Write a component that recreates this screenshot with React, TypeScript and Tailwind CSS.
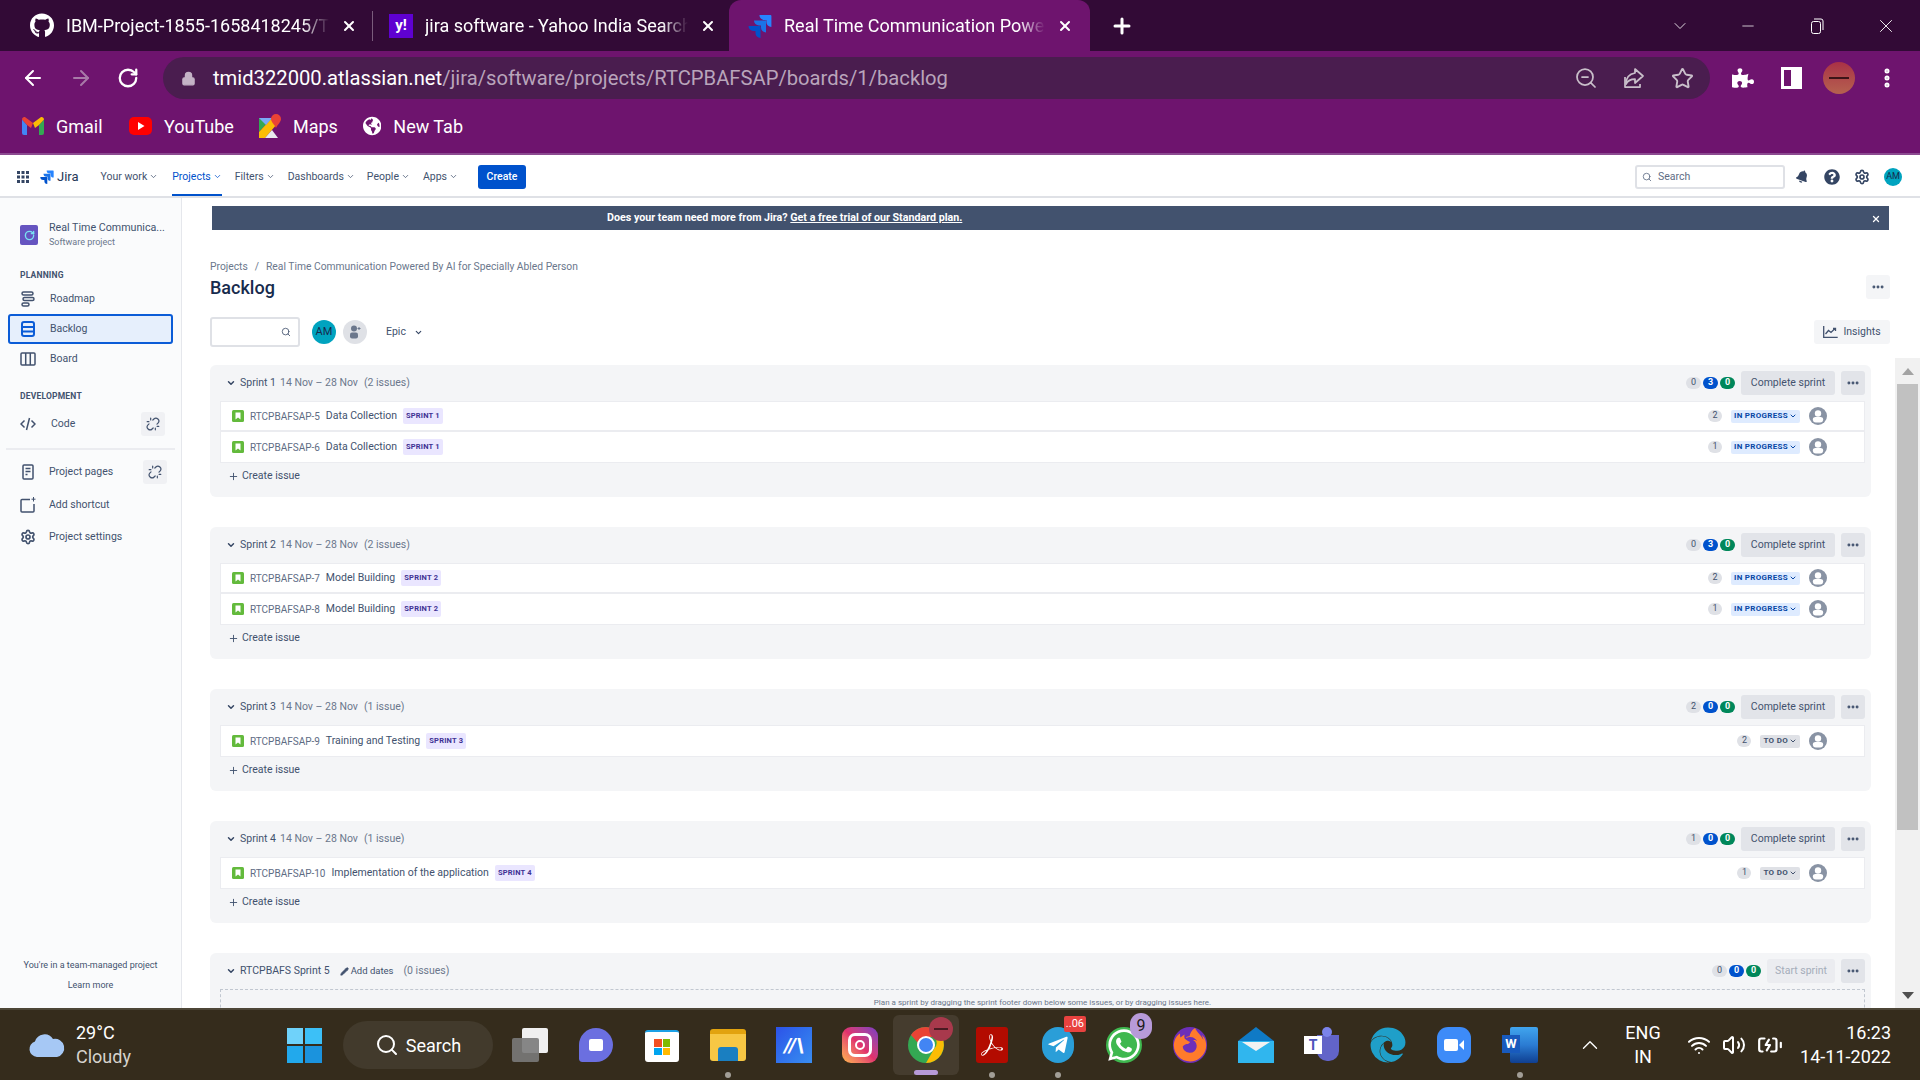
import { ChevronDown, Plus, Search, X, Minus, ChevronUp, ArrowLeft, ArrowRight, RotateCw, Lock, ZoomOut, Star, EllipsisVertical, Ellipsis, Unlink, Wifi, Volume2, BatteryCharging, Pencil, Settings } from 'lucide-react';
import { FaGithub, FaGlobeAmericas, FaPuzzlePiece, FaBell, FaQuestionCircle, FaTelegramPlane, FaWhatsapp, FaFirefoxBrowser, FaEdge } from 'react-icons/fa';
import { SiAdobeacrobatreader } from 'react-icons/si';

const JiraMark = ({ size = 16 }: { size?: number }) => (
  <svg width={size} height={size} viewBox="0 0 24 24">
    <path d="M22.5 1H11.4a5 5 0 0 0 5 5h2v2a5 5 0 0 0 5 5V2a1 1 0 0 0-.9-1z" fill="#2684ff" />
    <path d="M17 6.500H6a5 5 0 0 0 5 5h2v2a5 5 0 0 0 5 5v-11.500a.5.5 0 0 0-1-.5z" fill="#1a73e8" />
    <path d="M11.500 12H.5a5 5 0 0 0 5 5h2v2a5 5 0 0 0 5 5V13a1 1 0 0 0-1-1z" fill="#0052cc" />
  </svg>
);

const StoryIcon = () => (
  <svg width="12" height="12" viewBox="0 0 12 12" className="shrink-0">
    <rect width="12" height="12" rx="1.500" fill="#63ba3c" />
    <path d="M3.500 2.500h5v7L6 7.500l-2.500 2z" fill="#fff" />
  </svg>
);

const PersonIcon = () => (
  <svg width="18" height="18" viewBox="0 0 18 18" className="shrink-0">
    <circle cx="9" cy="9" r="9" fill="#8993a4" />
    <circle cx="9" cy="6.500" r="3.200" fill="#fff" />
    <path d="M3.800 12.500c0-1.800 1.500-2.500 2.500-2.500h5.400c1 0 2.500.7 2.500 2.500V13a3 3 0 0 1-3 2.500H6.800a3 3 0 0 1-3-2.500z" fill="#fff" />
  </svg>
);

const TopNavItem = ({ label, active, className }: { label: string; active?: boolean; className: string }) => (
  <div className={`flex items-center gap-[2px] text-[10.5px] ${active ? 'text-[#0052cc]' : 'text-[#42526e]'} ${className}`}>
    {label}
    <ChevronDown size={9} strokeWidth={2} />
  </div>
);

const Tab = ({ icon, label, active, width }: { icon: React.ReactNode; label: string; active?: boolean; width: string }) => (
  <div className={`flex items-center h-full shrink-0 ${width} ${active ? 'bg-[#6e146e] rounded-t-[12px]' : ''}`}>
    <div className="w-[24px] flex justify-center shrink-0">{icon}</div>
    <span className="ml-[12px] flex-1 min-w-0 overflow-hidden whitespace-nowrap text-[18px] text-white [mask-image:linear-gradient(to_right,black_90%,transparent)]">{label}</span>
    <X size={16} strokeWidth={3} className="text-white ml-[12px] shrink-0" />
  </div>
);

const Bookmark = ({ icon, label, width }: { icon: React.ReactNode; label: string; width: string }) => (
  <div className={`flex items-center gap-[12px] shrink-0 ${width}`}>
    {icon}
    <span className="text-[18px] text-white whitespace-nowrap">{label}</span>
  </div>
);

function BrowserChrome() {
  return (
    <div className="shrink-0" style={{ fontFamily: 'Roboto, sans-serif' }}>
      <div className="h-[51px] bg-[#320a36] flex items-center pl-[30px]">
        <Tab width="w-[327px]" label="IBM-Project-1855-1658418245/T" icon={<FaGithub size={25} className="text-white" />} />
        <div className="w-[1px] h-[30px] bg-[#7a5c7c] ml-[15px] mr-[16px]" />
        <Tab width="w-[327px]" label="jira software - Yahoo India Search" icon={<div className="w-[24px] h-[24px] bg-[#5f01d1] text-white text-[15px] font-bold flex items-center justify-center">y!</div>} />
        <div className="w-[13px]" />
        <div className="w-[361px] h-full">
          <Tab active width="w-[361px] pl-[19px] pr-[17px]" label="Real Time Communication Powered By AI" icon={<JiraMark size={26} />} />
        </div>
        <Plus size={24} strokeWidth={3} className="text-white ml-[20px]" />
        <div className="flex-1" />
        <div className="flex items-center text-white">
          <div className="w-[68px] flex justify-center"><ChevronDown size={20} strokeWidth={1} /></div>
          <div className="w-[68px] flex justify-center"><Minus size={18} strokeWidth={1} /></div>
          <div className="w-[70px] flex justify-center">
            <svg width="16" height="16" viewBox="0 0 16 16" fill="none" stroke="#fff"><rect x="2.500" y="3.500" width="9" height="12" rx="2" /><path d="M5 1h7a2 2 0 0 1 2 2v9" /></svg>
          </div>
          <div className="w-[68px] flex justify-center"><X size={22} strokeWidth={1} /></div>
        </div>
      </div>

      <div className="h-[52px] bg-[#6e146e] flex items-center pl-[21px] pt-[2px]">
        <div className="flex items-center w-[142px]">
          <ArrowLeft size={24} className="text-white" strokeWidth={2} />
          <ArrowRight size={24} className="text-[#a87aa8] ml-[24px]" strokeWidth={2} />
          <RotateCw size={22} className="text-white ml-[24px]" strokeWidth={2.500} />
        </div>
        <div className="w-[1547px] h-[42px] rounded-full bg-[#4a1d4f] flex items-center pl-[18px]">
          <Lock size={15} className="text-[#c4b3c6]" fill="#c4b3c6" />
          <div className="ml-[17px] text-[20.200px] whitespace-nowrap">
            <span className="text-white">tmid322000.atlassian.net</span>
            <span className="text-[#b9a5bb]">/jira/software/projects/RTCPBAFSAP/boards/1/backlog</span>
          </div>
          <div className="flex-1" />
          <ZoomOut size={24} className="text-[#c9bfca]" strokeWidth={1.750} />
          <svg width="24" height="24" viewBox="0 0 24 24" fill="none" stroke="#c9bfca" strokeWidth="1.750" strokeLinejoin="round" className="ml-[24px]">
            <path d="M3 11v10h15v-3" />
            <path d="M13 3l8 7-8 7v-4c-4 0-7 1-9 5 0-6 3-10 9-11z" />
          </svg>
          <Star size={23} className="text-[#c9bfca] ml-[25px] mr-[16px]" strokeWidth={2} />
        </div>
        <FaPuzzlePiece size={22} className="text-white ml-[22px]" />
        <div className="w-[21px] h-[22px] border-[3px] border-white bg-[#6e146e] ml-[27px] flex justify-end"><div className="w-[8px] bg-white" /></div>
        <div className="w-[32px] h-[32px] rounded-full bg-gradient-to-b from-[#a93046] to-[#b5614f] ml-[21px] flex items-center justify-center">
          <div className="w-[20px] h-[2px] bg-[#3c1418]" />
        </div>
        <EllipsisVertical size={24} className="text-white ml-[20px]" strokeWidth={3} />
      </div>

      <div className="h-[50px] bg-[#6e146e] flex items-center pl-[22px] pb-[4px]">
        <Bookmark width="w-[107px]" label="Gmail" icon={
          <svg width="22" height="18" viewBox="0 0 22 18">
            <path d="M0 2.500v13.500a2 2 0 0 0 2 2h3V8z" fill="#4285f4" />
            <path d="M22 2.500v13.500a2 2 0 0 1-2 2h-3V8z" fill="#34a853" />
            <path d="M0 2.500C0 .5 2.200-.6 3.600.5L11 6l-2 5-4-3z" fill="#ea4335" />
            <path d="M22 2.500c0-2-2.200-3.100-3.600-2L11 6l2 5 4-3z" fill="#fbbc04" />
          </svg>} />
        <Bookmark width="w-[130px]" label="YouTube" icon={
          <svg width="23" height="18" viewBox="0 0 23 18">
            <rect width="23" height="18" rx="5" fill="#ff0000" />
            <path d="M9 5l6.500 4L9 13z" fill="#fff" />
          </svg>} />
        <Bookmark width="w-[104px]" label="Maps" icon={
          <svg width="22" height="24" viewBox="0 0 22 24">
            <path d="M0 4h13L0 18z" fill="#34a853" />
            <path d="M0 18L13 4l5 6L6 24H0z" fill="#fbbc04" />
            <path d="M6 24L13 16l6 8z" fill="#e8eaed" />
            <path d="M0 4h13l-6 7z" fill="#7baaf7" />
            <path d="M17 0a5 5 0 0 1 5 5c0 3-3 5-5 9-1-3-5-6-5-9a5 5 0 0 1 5-5z" fill="#ea4335" />
          </svg>} />
        <Bookmark width="w-[100px]" label="New Tab" icon={<FaGlobeAmericas size={22} className="text-white" />} />
      </div>
      <div className="h-[2px] bg-[#8b4a90]" />
    </div>
  );
}

function JiraNav() {
  return (
    <div className="h-[43px] shrink-0 bg-white border-b-2 border-[#dfe1e6] flex items-center pl-[17px] pt-[2px] relative">
      <svg width="12" height="12" viewBox="0 0 12 12" fill="#344563">
        <rect width="3" height="3" /><rect x="4.500" width="3" height="3" /><rect x="9" width="3" height="3" />
        <rect y="4.500" width="3" height="3" /><rect x="4.500" y="4.500" width="3" height="3" /><rect x="9" y="4.500" width="3" height="3" />
        <rect y="9" width="3" height="3" /><rect x="4.500" y="9" width="3" height="3" /><rect x="9" y="9" width="3" height="3" />
      </svg>
      <div className="ml-[11px]"><JiraMark size={14} /></div>
      <span className="ml-[3px] text-[13px] text-[#253858]">Jira</span>
      <TopNavItem label="Your work" className="ml-[22px]" />
      <div className="ml-[14px] h-full flex items-center relative">
        <TopNavItem label="Projects" active className="" />
        <div className="absolute left-0 right-0 bottom-0 h-[2px] bg-[#0052cc]" />
      </div>
      <TopNavItem label="Filters" className="ml-[13px]" />
      <TopNavItem label="Dashboards" className="ml-[13px]" />
      <TopNavItem label="People" className="ml-[12px]" />
      <TopNavItem label="Apps" className="ml-[13px]" />
      <div className="ml-[20px] w-[48px] h-[24px] bg-[#0052cc] rounded-[3px] text-white text-[10.5px] font-medium flex items-center justify-center">Create</div>
      <div className="flex-1" />
      <div className="w-[150px] h-[24px] rounded-[3px] border-2 border-[#dfe1e6] flex items-center pl-[5px] gap-[6px] text-[10.5px] text-[#5e6c84]">
        <Search size={10} />
        Search
      </div>
      <FaBell size={13} className="text-[#344563] ml-[11px] rotate-[20deg]" />
      <FaQuestionCircle size={16} className="text-[#344563] ml-[15px]" />
      <Settings size={16} strokeWidth={2.500} className="text-[#344563] ml-[14px]" />
      <div className="w-[18px] h-[18px] rounded-full bg-[#00a3bf] text-[#172b4d] text-[9px] flex items-center justify-center ml-[14px] mr-[18px]">AM</div>
    </div>
  );
}

const SideLabel = ({ children, className }: { children: React.ReactNode; className: string }) => (
  <div className={`h-[16px] pl-[20px] text-[8.500px] font-bold tracking-[0.2px] text-[#42526e] flex items-center ${className}`}>{children}</div>
);

const SideItem = ({ icon, label, active }: { icon: React.ReactNode; label: string; active?: boolean }) => (
  <div className={`h-[30px] mx-[8px] flex items-center gap-[14px] text-[10.5px] text-[#42526e] rounded-[3px] ${active ? 'bg-[#e6effc] border-2 border-[#0b5cd7] pl-[10px]' : 'pl-[12px]'}`}>
    <div className="w-[16px] flex justify-center shrink-0">{icon}</div>
    {label}
  </div>
);

const UnlinkChip = () => (
  <div className="w-[24px] h-[24px] rounded-[3px] bg-[#f0f1f4] flex items-center justify-center">
    <Unlink size={14} className="text-[#42526e]" />
  </div>
);

function Sidebar() {
  return (
    <div className="w-[182px] shrink-0 bg-[#fafbfc] border-r border-[#e5e7ec] flex flex-col">
      <div className="mt-[23px] h-[28px] flex items-center pl-[20px] gap-[11px]">
        <div className="w-[18px] h-[20px] rounded-[2px] bg-[#6554c0] flex items-center justify-center">
          <RotateCw size={11} className="text-[#79e2f2]" strokeWidth={3} />
        </div>
        <div>
          <div className="text-[10.700px] leading-[14px] text-[#42526e]">Real Time Communica...</div>
          <div className="text-[9px] leading-[14px] text-[#6b778c]">Software project</div>
        </div>
      </div>
      <SideLabel className="mt-[18px]">PLANNING</SideLabel>
      <div className="mt-[1px]">
        <SideItem label="Roadmap" icon={
          <svg width="14" height="16" viewBox="0 0 14 16" fill="none" stroke="#42526e" strokeWidth="1.500">
            <rect x="1" y="1" width="11" height="3" rx="1.500" /><rect x="2" y="6.500" width="11" height="3" rx="1.500" /><rect x="1" y="12" width="7" height="3" rx="1.500" />
          </svg>} />
        <SideItem active label="Backlog" icon={
          <svg width="14" height="16" viewBox="0 0 14 16" fill="none" stroke="#0b5cd7" strokeWidth="2">
            <rect x="1" y="1" width="12" height="14" rx="2" /><path d="M1 6h12M1 10.500h12" />
          </svg>} />
        <SideItem label="Board" icon={
          <svg width="16" height="14" viewBox="0 0 16 14" fill="none" stroke="#42526e" strokeWidth="1.500">
            <rect x="1" y="1" width="14" height="12" rx="1" /><path d="M5.700 1v12M10.300 1v12" />
          </svg>} />
      </div>
      <SideLabel className="mt-[14px]">DEVELOPMENT</SideLabel>
      <div className="mt-[8px] h-[24px] flex items-center pl-[20px] pr-[16px] text-[10.5px] text-[#42526e]">
        <svg width="16" height="14" viewBox="0 0 16 14" fill="none" stroke="#42526e" strokeWidth="1.500">
          <path d="M4.500 3.500L1 7l3.500 3.500M11.500 3.500L15 7l-3.500 3.500M9.500 1L6.500 13" />
        </svg>
        <span className="ml-[15px] flex-1">Code</span>
        <UnlinkChip />
      </div>
      <div className="mt-[12px] mx-[6px] h-[2px] bg-[#ebecf0]" />
      <div className="mt-[10px] h-[24px] flex items-center pl-[20px] pr-[14px] text-[10.5px] text-[#42526e]">
        <svg width="16" height="16" viewBox="0 0 16 16" fill="none" stroke="#42526e" strokeWidth="1.500">
          <rect x="3" y="1" width="10" height="14" rx="1" /><path d="M5.500 4.500h5M5.500 7.500h5M5.500 10.500h2" />
        </svg>
        <span className="ml-[13px] flex-1">Project pages</span>
        <UnlinkChip />
      </div>
      <div className="mt-[9px] h-[24px] flex items-center pl-[20px] text-[10.5px] text-[#42526e]">
        <svg width="16" height="16" viewBox="0 0 16 16" fill="none" stroke="#42526e" strokeWidth="1.500">
          <path d="M10 2.500H2a1 1 0 0 0-1 1V14a1 1 0 0 0 1 1h11a1 1 0 0 0 1-1V7" /><path d="M13.500 0v4.500M11.500 2.200h4" strokeWidth="1" />
        </svg>
        <span className="ml-[13px]">Add shortcut</span>
      </div>
      <div className="mt-[8px] h-[24px] flex items-center pl-[20px] text-[10.5px] text-[#42526e]">
        <Settings size={16} strokeWidth={2.500} />
        <span className="ml-[13px]">Project settings</span>
      </div>
      <div className="mt-auto pb-[15px] text-center text-[9px] text-[#42526e]">
        <div className="h-[16px] leading-[16px]">You're in a team-managed project</div>
        <div className="mt-[4px] h-[16px] leading-[16px]">Learn more</div>
      </div>
    </div>
  );
}

const CountBadge = ({ n, tone }: { n: number; tone: 'gray' | 'blue' | 'green' }) => (
  <div className={`w-[15px] h-[12px] rounded-full text-[9px] font-bold flex items-center justify-center ${tone === 'gray' ? 'bg-[#dfe1e6] text-[#42526e] font-normal' : tone === 'blue' ? 'bg-[#0052cc] text-white' : 'bg-[#00875a] text-white'}`}>{n}</div>
);

type Issue = { key: string; title: string; points: number };
type SprintProps = { name: string; issues: Issue[]; tag: string; status: 'IN PROGRESS' | 'TO DO'; counts: [number, number, number]; label: string };

const IssueRow = ({ issue, tag, status, last }: { issue: Issue; tag: string; status: SprintProps['status']; last: boolean }) => (
  <div className={`h-[30px] flex items-center pl-[11px] pr-[37px] ${last ? '' : 'border-b-2 border-[#ebecf0]'}`}>
    <StoryIcon />
    <span className="ml-[6px] text-[10px] text-[#5e6c84]">{issue.key}</span>
    <span className="ml-[6px] text-[10.5px] text-[#42526e]">{issue.title}</span>
    <span className="ml-[6px] h-[16px] px-[3px] rounded-[2px] bg-[#eae6ff] text-[#403294] text-[7.500px] font-bold tracking-[0.2px] flex items-center">{tag}</span>
    <div className="flex-1" />
    <div className="w-[14px] h-[12px] rounded-full bg-[#dfe1e6] text-[#42526e] text-[9px] flex items-center justify-center">{issue.points}</div>
    <div className="ml-[9px] h-[13px] px-[3px] rounded-[2px] text-[8px] font-bold tracking-[0.3px] flex items-center gap-[1px] bg-[#deebff] text-[#0747a6] data-[todo=true]:bg-[#dfe1e6] data-[todo=true]:text-[#42526e]" data-todo={status === 'TO DO'}>
      {status}
      <ChevronDown size={8} strokeWidth={3} />
    </div>
    <div className="ml-[9px]"><PersonIcon /></div>
  </div>
);

const SprintHeaderRight = ({ counts, label, disabled }: { counts: [number, number, number]; label: string; disabled?: boolean }) => (
  <div className="flex items-center">
    <CountBadge n={counts[0]} tone="gray" />
    <div className="ml-[2px]"><CountBadge n={counts[1]} tone="blue" /></div>
    <div className="ml-[2px]"><CountBadge n={counts[2]} tone="green" /></div>
    <div className={`ml-[6px] h-[24px] rounded-[3px] text-[10.5px] flex items-center justify-center ${disabled ? 'w-[68px] bg-[#ebecf0] text-[#a5adba]' : 'w-[94px] bg-[#e2e4e9] text-[#42526e]'}`}>{label}</div>
    <div className="ml-[6px] w-[24px] h-[24px] rounded-[3px] bg-[#e2e4e9] flex items-center justify-center">
      <Ellipsis size={14} strokeWidth={3} className="text-[#42526e]" />
    </div>
  </div>
);

function SprintCard({ name, issues, tag, status, counts, label }: SprintProps) {
  const n = issues.length;
  return (
    <div className="bg-[#f4f5f7] rounded-[6px] mr-[19px] mb-[30px] pb-[8px]">
      <div className="h-[36px] flex items-center pl-[16px] pr-[6px] text-[10.5px]">
        <ChevronDown size={10} strokeWidth={3.500} className="text-[#344563]" />
        <span className="ml-[4px] text-[#42526e]">{name}</span>
        <span className="ml-[4px] text-[#6b778c]">14 Nov – 28 Nov</span>
        <span className="ml-[6px] text-[#6b778c]">({n} issue{n > 1 ? 's' : ''})</span>
        <div className="flex-1" />
        <SprintHeaderRight counts={counts} label={label} />
      </div>
      <div className="mx-[10px] mr-[6px] bg-white border border-[#ebecf0]">
        {issues.map((issue, i) => (
          <IssueRow key={issue.key} issue={issue} tag={tag} status={status} last={i === n - 1} />
        ))}
      </div>
      <div className="h-[26px] flex items-center pl-[18px] gap-[3px] text-[10.5px] text-[#42526e]">
        <Plus size={11} />
        Create issue
      </div>
    </div>
  );
}

const sprints: SprintProps[] = [
  { name: 'Sprint 1', tag: 'SPRINT 1', status: 'IN PROGRESS', counts: [0, 3, 0], label: 'Complete sprint', issues: [{ key: 'RTCPBAFSAP-5', title: 'Data Collection', points: 2 }, { key: 'RTCPBAFSAP-6', title: 'Data Collection', points: 1 }] },
  { name: 'Sprint 2', tag: 'SPRINT 2', status: 'IN PROGRESS', counts: [0, 3, 0], label: 'Complete sprint', issues: [{ key: 'RTCPBAFSAP-7', title: 'Model Building', points: 2 }, { key: 'RTCPBAFSAP-8', title: 'Model Building', points: 1 }] },
  { name: 'Sprint 3', tag: 'SPRINT 3', status: 'TO DO', counts: [2, 0, 0], label: 'Complete sprint', issues: [{ key: 'RTCPBAFSAP-9', title: 'Training and Testing', points: 2 }] },
  { name: 'Sprint 4', tag: 'SPRINT 4', status: 'TO DO', counts: [1, 0, 0], label: 'Complete sprint', issues: [{ key: 'RTCPBAFSAP-10', title: 'Implementation of the application', points: 1 }] },
];

function Backlog() {
  return (
    <div className="flex-1 min-w-0 overflow-hidden pl-[28px] pr-[5px]">
      <div className="mt-[8px] ml-[2px] mr-[1px] h-[24px] bg-[#42526e] text-white text-[10.700px] flex items-center pl-[395px] relative">
        <span className="font-bold">Does your team need more from Jira?&nbsp;</span>
        <span className="font-bold underline">Get a free trial of our Standard plan.</span>
        <X size={10} strokeWidth={3} className="absolute right-[8px] top-[8px]" />
      </div>
      <div className="mt-[29px] h-[16px] flex items-center text-[10.300px] text-[#6b778c]">
        Projects<span className="mx-[7px]">/</span>Real Time Communication Powered By AI for Specially Abled Person
      </div>
      <div className="h-[24px] flex items-center justify-between">
        <h1 className="text-[18px] font-medium text-[#172b4d]">Backlog</h1>
        <div className="w-[24px] h-[24px] rounded-[3px] bg-[#f4f5f7] flex items-center justify-center">
          <Ellipsis size={14} strokeWidth={3} className="text-[#42526e]" />
        </div>
      </div>
      <div className="mt-[18px] h-[30px] flex items-center">
        <div className="w-[90px] h-[30px] border-2 border-[#dfe1e6] rounded-[3px] flex items-center justify-end pr-[7px]">
          <Search size={10} className="text-[#42526e]" />
        </div>
        <div className="ml-[12px] w-[24px] h-[24px] rounded-full bg-[#00a3bf] text-[#172b4d] text-[11px] flex items-center justify-center">AM</div>
        <div className="ml-[7px] w-[24px] h-[24px] rounded-full bg-[#dfe1e6] flex items-center justify-center">
          <svg width="14" height="14" viewBox="0 0 14 14" fill="#6b778c"><circle cx="6" cy="3.500" r="3" /><rect x="2" y="7.500" width="8" height="6" rx="2" /><path d="M11 2v3M9.500 3.500h3" stroke="#6b778c" /></svg>
        </div>
        <span className="ml-[19px] text-[10.5px] text-[#42526e]">Epic</span>
        <ChevronDown size={9} strokeWidth={3} className="ml-[8px] text-[#344563]" />
        <div className="flex-1" />
        <div className="h-[24px] w-[76px] rounded-[3px] bg-[#f4f5f7] flex items-center justify-center gap-[5px] text-[10.5px] text-[#42526e]">
          <svg width="15" height="12" viewBox="0 0 15 12" fill="none" stroke="#42526e" strokeWidth="1.300"><path d="M.7 0v11.300h14" /><path d="M2.500 8l3-3.500 2.500 2 4-4M10 2.500h2.500V5" /></svg>
          Insights
        </div>
      </div>
      <div className="mt-[18px]">
        {sprints.map((s) => <SprintCard key={s.name} {...s} />)}
        <div className="bg-[#f4f5f7] rounded-[6px] mr-[19px] h-[200px]">
          <div className="h-[36px] flex items-center pl-[16px] pr-[6px] text-[10.5px]">
            <ChevronDown size={10} strokeWidth={3.500} className="text-[#344563]" />
            <span className="ml-[4px] text-[#42526e]">RTCPBAFS Sprint 5</span>
            <Pencil size={9} fill="#42526e" className="ml-[10px] text-[#42526e]" />
            <span className="ml-[2px] text-[#42526e] text-[9.500px]">Add dates</span>
            <span className="ml-[10px] text-[#6b778c]">(0 issues)</span>
            <div className="flex-1" />
            <SprintHeaderRight counts={[0, 0, 0]} label="Start sprint" disabled />
          </div>
          <div className="mx-[10px] mr-[6px] h-[60px] border border-dashed border-[#c1c7d0] text-center text-[8px] leading-[26px] text-[#6b778c]">
            Plan a sprint by dragging the sprint footer down below some issues, or by dragging issues here.
          </div>
        </div>
      </div>
    </div>
  );
}

function FakeScrollbar() {
  return (
    <div className="w-[25px] shrink-0 flex flex-col pt-[160px]">
      <div className="flex-1 bg-[#f1f1f1] flex flex-col items-center">
        <div className="h-[26px] flex items-center justify-center">
          <div className="w-0 h-0 border-x-[6px] border-x-transparent border-b-[7px] border-b-[#a3a3a3]" />
        </div>
        <div className="w-[21px] h-[446px] bg-[#c1c1c1]" />
        <div className="flex-1" />
        <div className="h-[26px] flex items-center justify-center">
          <div className="w-0 h-0 border-x-[6px] border-x-transparent border-t-[7px] border-t-[#505050]" />
        </div>
      </div>
    </div>
  );
}

const TaskIcon = ({ children, dot, active }: { children: React.ReactNode; dot?: boolean; active?: boolean }) => (
  <div className={`w-[66px] flex flex-col items-center justify-center relative shrink-0 ${active ? 'bg-[#453c2e] rounded-[6px] h-[60px]' : 'h-full'}`}>
    {children}
    {dot && <div className="absolute bottom-[2px] w-[6px] h-[6px] rounded-full bg-[#a29e96]" />}
    {active && <div className="absolute bottom-[0px] w-[24px] h-[5px] rounded-full bg-[#b79ad8]" />}
  </div>
);

function Taskbar() {
  return (
    <div className="h-[72px] shrink-0 bg-[#352c1c] border-t-2 border-[#4d4637] flex items-center" style={{ fontFamily: 'Roboto, sans-serif' }}>
      <div className="w-[271px] shrink-0 flex items-center pl-[28px]">
        <svg width="38" height="26" viewBox="0 0 38 26">
          <path d="M9 25a8 8 0 0 1-2-15.600A10 10 0 0 1 25 7a8 8 0 0 1 4 18z" fill="#a6c8f5" />
        </svg>
        <div className="ml-[10px] text-white text-[18px] leading-[24px]">
          <div>29°C</div>
          <div className="text-[#d6d3cd]">Cloudy</div>
        </div>
      </div>
      <TaskIcon>
        <div className="grid grid-cols-2 gap-[2px] w-[35px] h-[35px]">
          <div className="bg-[#6fd2fa]" /><div className="bg-[#3cc0f7]" /><div className="bg-[#22a9ec]" /><div className="bg-[#1b93dd]" />
        </div>
      </TaskIcon>
      <div className="ml-[6px] w-[150px] h-[48px] rounded-full bg-[#423a2c] flex items-center justify-center gap-[7px] text-white text-[18px] shrink-0">
        <Search size={24} /> Search
      </div>
      <div className="w-[4px] shrink-0" />
      <TaskIcon>
        <div className="relative w-[36px] h-[34px]">
          <div className="absolute right-0 top-0 w-[26px] h-[25px] bg-[#f0f0f0] rounded-[2px]" />
          <div className="absolute left-0 bottom-0 w-[27px] h-[24px] bg-[#7a7a7a]/90 rounded-[2px]" />
        </div>
      </TaskIcon>
      <TaskIcon>
        <div className="w-[34px] h-[34px] rounded-[50%_50%_50%_10%] bg-[#6b6fe0] flex items-center justify-center">
          <div className="w-[14px] h-[12px] bg-white rounded-[2px]" />
        </div>
      </TaskIcon>
      <TaskIcon>
        <div className="w-[34px] h-[32px] bg-white rounded-[3px] mt-[2px] flex items-center justify-center border-t-2 border-[#1aa0e6]">
          <div className="grid grid-cols-2 gap-[1px] w-[16px] h-[16px]"><div className="bg-[#f25022]" /><div className="bg-[#7fba00]" /><div className="bg-[#00a4ef]" /><div className="bg-[#ffb900]" /></div>
        </div>
      </TaskIcon>
      <TaskIcon dot>
        <div className="w-[36px] h-[32px] bg-[#f7c744] rounded-[3px] border-t-[5px] border-[#e2a30f] flex items-end justify-center">
          <div className="w-[20px] h-[14px] bg-[#1a7fc1] rounded-t-[3px]" />
        </div>
      </TaskIcon>
      <TaskIcon>
        <div className="w-[36px] h-[36px] bg-gradient-to-br from-[#2d52e8] to-[#3a8df0] flex items-center justify-center text-white font-bold italic text-[20px]">//\</div>
      </TaskIcon>
      <TaskIcon>
        <div className="w-[36px] h-[36px] rounded-[9px] bg-gradient-to-tr from-[#fdb548] via-[#e1306c] to-[#7a37c4] flex items-center justify-center">
          <div className="w-[24px] h-[24px] rounded-[7px] border-[3px] border-white flex items-center justify-center"><div className="w-[10px] h-[10px] rounded-full border-[2px] border-white" /></div>
        </div>
      </TaskIcon>
      <TaskIcon active>
        <svg width="36" height="36" viewBox="0 0 36 36">
          <circle cx="18" cy="18" r="18" fill="#34a853" />
          <path d="M18 0a18 18 0 0 1 16 10H18a8 8 0 0 0-8 6L3 8A18 18 0 0 1 18 0z" fill="#ea4335" />
          <path d="M34 10a18 18 0 0 1-16 26l8-14a8 8 0 0 0 0-12z" fill="#fbbc04" />
          <circle cx="18" cy="18" r="8" fill="#4285f4" stroke="#fff" strokeWidth="2" />
        </svg>
        <div className="absolute top-[2px] right-[6px] w-[24px] h-[24px] rounded-full bg-[#a8394c] flex items-center justify-center"><div className="w-[14px] h-[2px] bg-[#4a1a22]" /></div>
      </TaskIcon>
      <TaskIcon dot>
        <div className="w-[32px] h-[36px] rounded-[3px] bg-[#b30b00] flex items-center justify-center">
          <SiAdobeacrobatreader size={22} className="text-white" />
        </div>
      </TaskIcon>
      <TaskIcon dot>
        <div className="w-[32px] h-[36px] rounded-full bg-[#2a9ed8] flex items-center justify-center">
          <FaTelegramPlane size={22} className="text-white" />
        </div>
        <div className="absolute top-[6px] right-[5px] h-[16px] px-[2px] rounded-[2px] bg-[#e8423f] text-white text-[11px] leading-[16px]">..06</div>
      </TaskIcon>
      <TaskIcon>
        <div className="w-[36px] h-[36px] rounded-full bg-[#3fb84f] flex items-center justify-center">
          <FaWhatsapp size={36} className="text-white" />
        </div>
        <div className="absolute top-[3px] right-[5px] w-[22px] h-[26px] rounded-full bg-[#b79ad8] text-[#1a1a1a] text-[16px] flex items-center justify-center">9</div>
      </TaskIcon>
      <TaskIcon>
        <div className="w-[34px] h-[36px] rounded-full bg-[#6c2fb9] flex items-center justify-center">
          <FaFirefoxBrowser size={36} className="text-[#ff7b2b]" />
        </div>
      </TaskIcon>
      <TaskIcon>
        <svg width="36" height="36" viewBox="0 0 36 36">
          <path d="M18 0L36 14v22H0V14z" fill="#0f7ac6" />
          <rect y="14" width="36" height="22" fill="#30b6ee" />
          <path d="M4 15h28L18 24z" fill="#f2f2f2" />
        </svg>
      </TaskIcon>
      <TaskIcon>
        <div className="relative w-[36px] h-[36px]">
          <div className="absolute right-[1px] top-[8px] w-[22px] h-[26px] rounded-b-[10px] bg-[#6264c8]" />
          <div className="absolute right-[8px] top-0 w-[10px] h-[10px] rounded-full bg-[#7b83eb]" />
          <div className="absolute left-0 top-[9px] w-[18px] h-[18px] bg-white text-[#4b53bc] text-[14px] font-bold flex items-center justify-center">T</div>
        </div>
      </TaskIcon>
      <TaskIcon>
        <FaEdge size={36} className="text-[#1f9fc9]" />
      </TaskIcon>
      <TaskIcon>
        <div className="w-[34px] h-[36px] rounded-[11px] bg-[#3d8bf8] flex items-center justify-center">
          <div className="w-[14px] h-[12px] bg-white rounded-[2px]" /><div className="w-0 h-0 ml-[1px] border-y-[5px] border-y-transparent border-r-[5px] border-r-white" />
        </div>
      </TaskIcon>
      <TaskIcon dot>
        <div className="relative w-[36px] h-[36px]">
          <div className="absolute right-0 top-0 w-[28px] h-[36px] rounded-[2px] bg-gradient-to-b from-[#41a5ee] via-[#2b7cd3] to-[#103f91]" />
          <div className="absolute left-0 top-[8px] w-[18px] h-[18px] bg-[#185abd] text-white text-[13px] font-bold flex items-center justify-center">W</div>
        </div>
      </TaskIcon>
      <div className="w-[24px] shrink-0" />
      <ChevronUp size={26} strokeWidth={1.250} className="text-white shrink-0" />
      <div className="w-[80px] shrink-0 text-center text-white text-[18px] leading-[24px]">
        <div>ENG</div>
        <div>IN</div>
      </div>
      <Wifi size={24} className="text-white ml-[4px] shrink-0" />
      <Volume2 size={24} className="text-white ml-[11px] shrink-0" />
      <BatteryCharging size={26} className="text-white ml-[11px] shrink-0" />
      <div className="flex-1 pr-[29px] text-right text-white text-[18px] leading-[24px]">
        <div>16:23</div>
        <div>14-11-2022</div>
      </div>
    </div>
  );
}

export default function App() {
  return (
    <div className="h-screen flex flex-col overflow-hidden bg-white" style={{ fontFamily: 'Roboto, "Noto Sans", sans-serif' }}>
      <BrowserChrome />
      <JiraNav />
      <div className="flex-1 min-h-0 flex overflow-hidden">
        <Sidebar />
        <Backlog />
        <FakeScrollbar />
      </div>
      <Taskbar />
    </div>
  );
}
